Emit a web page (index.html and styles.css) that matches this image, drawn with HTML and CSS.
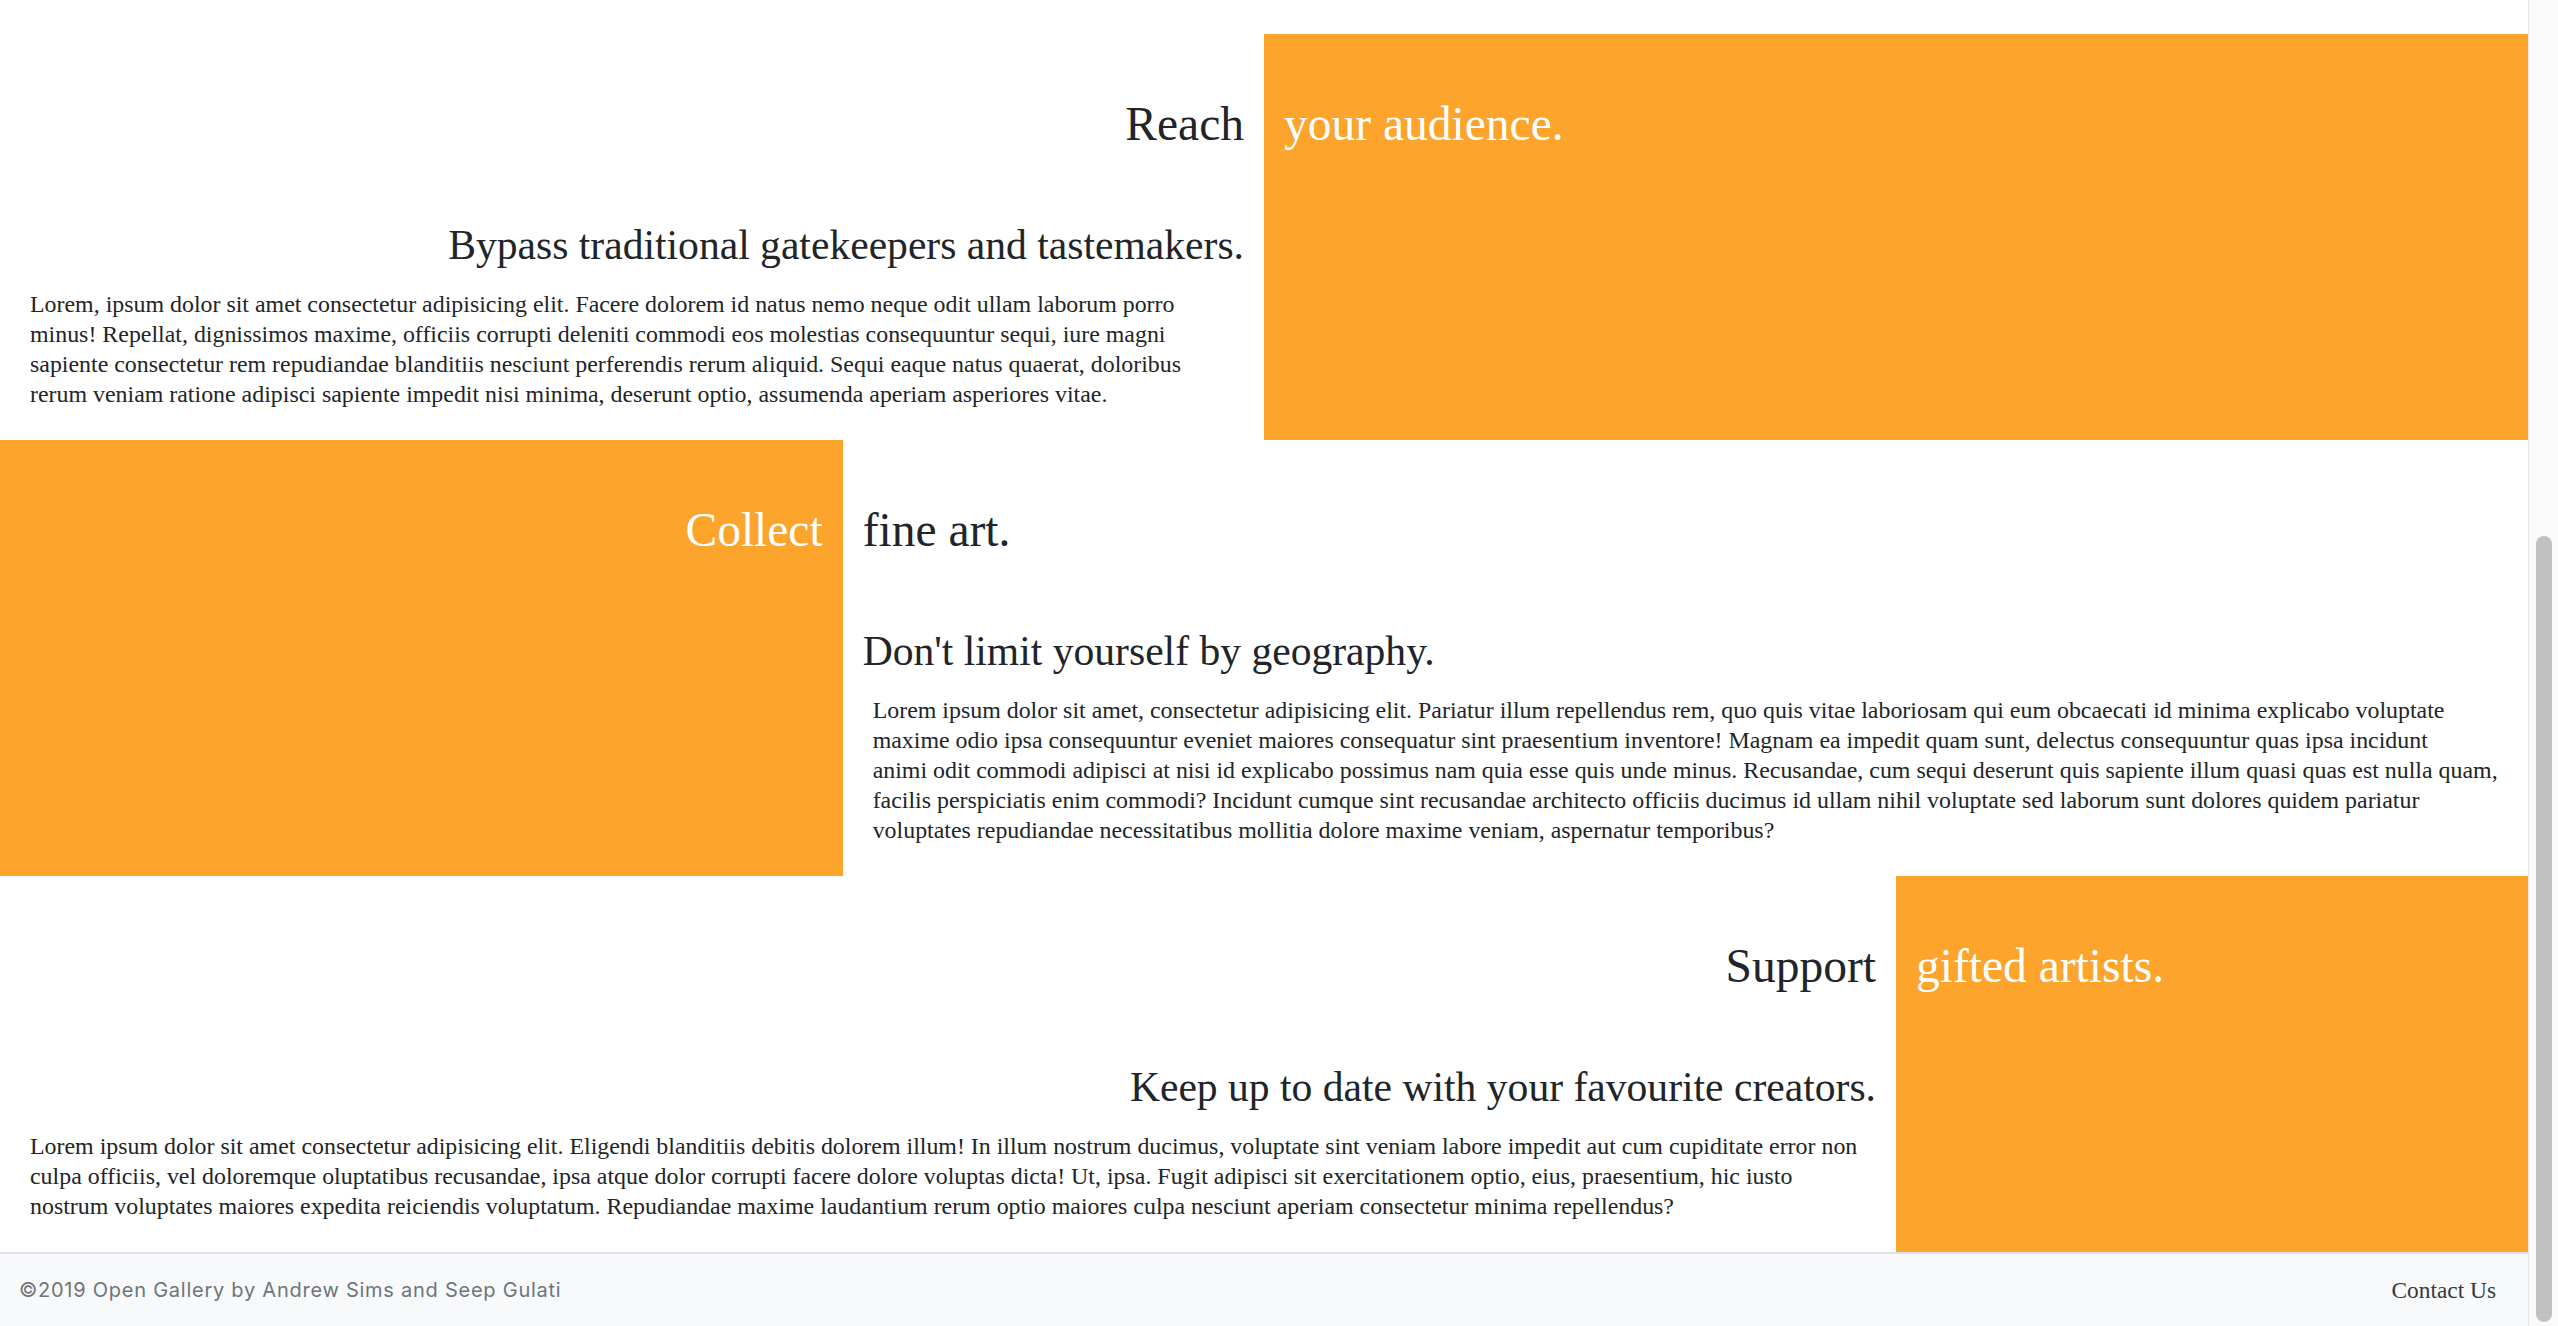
FILE: index.html
```html
<!DOCTYPE html>
<html>
<head>
<meta charset="utf-8">
<title>Open Gallery</title>
<link rel="stylesheet" href="styles.css">
</head>
<body>
<div class="viewport">
  <div class="page">
    <main class="features">
      <section class="feature feature--halves">
        <div class="col col--text">
          <h1 class="lead lead--end">Reach</h1>
          <h2 class="sub sub--end">Bypass traditional gatekeepers and tastemakers.</h2>
          <p class="body">Lorem, ipsum dolor sit amet consectetur adipisicing elit. Facere dolorem id natus nemo neque odit ullam laborum porro<br>minus! Repellat, dignissimos maxime, officiis corrupti deleniti commodi eos molestias consequuntur sequi, iure magni<br>sapiente consectetur rem repudiandae blanditiis nesciunt perferendis rerum aliquid. Sequi eaque natus quaerat, doloribus<br>rerum veniam ratione adipisci sapiente impedit nisi minima, deserunt optio, assumenda aperiam asperiores vitae.</p>
        </div>
        <div class="col col--accent">
          <h1 class="lead lead--light">your audience.</h1>
        </div>
      </section>

      <section class="feature feature--thirds">
        <div class="col col--accent">
          <h1 class="lead lead--end lead--light">Collect</h1>
        </div>
        <div class="col col--text">
          <h1 class="lead">fine art.</h1>
          <h2 class="sub">Don't limit yourself by geography.</h2>
          <p class="body">Lorem ipsum dolor sit amet, consectetur adipisicing elit. Pariatur illum repellendus rem, quo quis vitae laboriosam qui eum obcaecati id minima explicabo voluptate<br>maxime odio ipsa consequuntur eveniet maiores consequatur sint praesentium inventore! Magnam ea impedit quam sunt, delectus consequuntur quas ipsa incidunt<br>animi odit commodi adipisci at nisi id explicabo possimus nam quia esse quis unde minus. Recusandae, cum sequi deserunt quis sapiente illum quasi quas est nulla quam,<br>facilis perspiciatis enim commodi? Incidunt cumque sint recusandae architecto officiis ducimus id ullam nihil voluptate sed laborum sunt dolores quidem pariatur<br>voluptates repudiandae necessitatibus mollitia dolore maxime veniam, aspernatur temporibus?</p>
        </div>
      </section>

      <section class="feature feature--quarters">
        <div class="col col--text">
          <h1 class="lead lead--end">Support</h1>
          <h2 class="sub sub--end">Keep up to date with your favourite creators.</h2>
          <p class="body">Lorem ipsum dolor sit amet consectetur adipisicing elit. Eligendi blanditiis debitis dolorem illum! In illum nostrum ducimus, voluptate sint veniam labore impedit aut cum cupiditate error non<br>culpa officiis, vel doloremque oluptatibus recusandae, ipsa atque dolor corrupti facere dolore voluptas dicta! Ut, ipsa. Fugit adipisci sit exercitationem optio, eius, praesentium, hic iusto<br>nostrum voluptates maiores expedita reiciendis voluptatum. Repudiandae maxime laudantium rerum optio maiores culpa nesciunt aperiam consectetur minima repellendus?</p>
        </div>
        <div class="col col--accent">
          <h1 class="lead lead--light">gifted artists.</h1>
        </div>
      </section>
    </main>

    <footer class="footer">
      <span class="copyright">&copy;2019 Open Gallery by Andrew Sims and Seep Gulati</span>
      <a class="contact" href="#">Contact Us</a>
    </footer>
  </div>

  <div class="scrollbar">
    <div class="scrollbar__thumb"></div>
  </div>
</div>
</body>
</html>
```

FILE: styles.css
```css
* { box-sizing: border-box; }

html, body {
  margin: 0;
  height: 100%;
  overflow: hidden;
  background: #fff;
}

body {
  font-family: "Liberation Serif", "Times New Roman", serif;
  color: #212529;
}

.viewport {
  display: flex;
  height: 100vh;
}

.page {
  flex: 1;
  display: flex;
  flex-direction: column;
  min-width: 0;
}

.features {
  padding-top: 34px;
}

.feature {
  display: grid;
}

.feature--halves { grid-template-columns: 1fr 1fr; }
.feature--thirds { grid-template-columns: 1fr 2fr; }
.feature--quarters { grid-template-columns: 3fr 1fr; }

.col {
  padding: 64px 20px 31px;
  min-width: 0;
}

.col--accent {
  background: #fca42c;
}

.lead {
  margin: 0 0 72px;
  font-size: 47.5px;
  line-height: 52px;
  font-weight: 400;
}

.lead--end { text-align: right; }
.lead--light { color: #fff; }

.sub {
  margin: 0 0 21px;
  font-size: 41.6px;
  line-height: 46px;
  font-weight: 400;
}

.sub--end { text-align: right; }

.body {
  margin: 0;
  padding: 0 10px;
  font-size: 23.9px;
  line-height: 30px;
  white-space: nowrap;
}

.footer {
  flex: 1;
  display: flex;
  align-items: center;
  justify-content: space-between;
  padding: 0 32px 0 19px;
  background: #f8f9fa;
  border-top: 2px solid #dee2e6;
}

.copyright {
  font-family: Inter, "Liberation Sans", sans-serif;
  font-size: 20px;
  letter-spacing: 0.75px;
  color: #6c757d;
}

.contact {
  font-family: "Liberation Serif", "Times New Roman", serif;
  font-size: 23.4px;
  color: #343a40;
  text-decoration: none;
}

.scrollbar {
  width: 30px;
  flex: none;
  display: flex;
  flex-direction: column;
  justify-content: flex-end;
  padding: 0 6px 4px 7px;
  background: #fafafa;
  border-left: 1px solid #e6e6e6;
}

.scrollbar__thumb {
  height: 786px;
  border-radius: 8px;
  background: #c1c1c1;
}
```
